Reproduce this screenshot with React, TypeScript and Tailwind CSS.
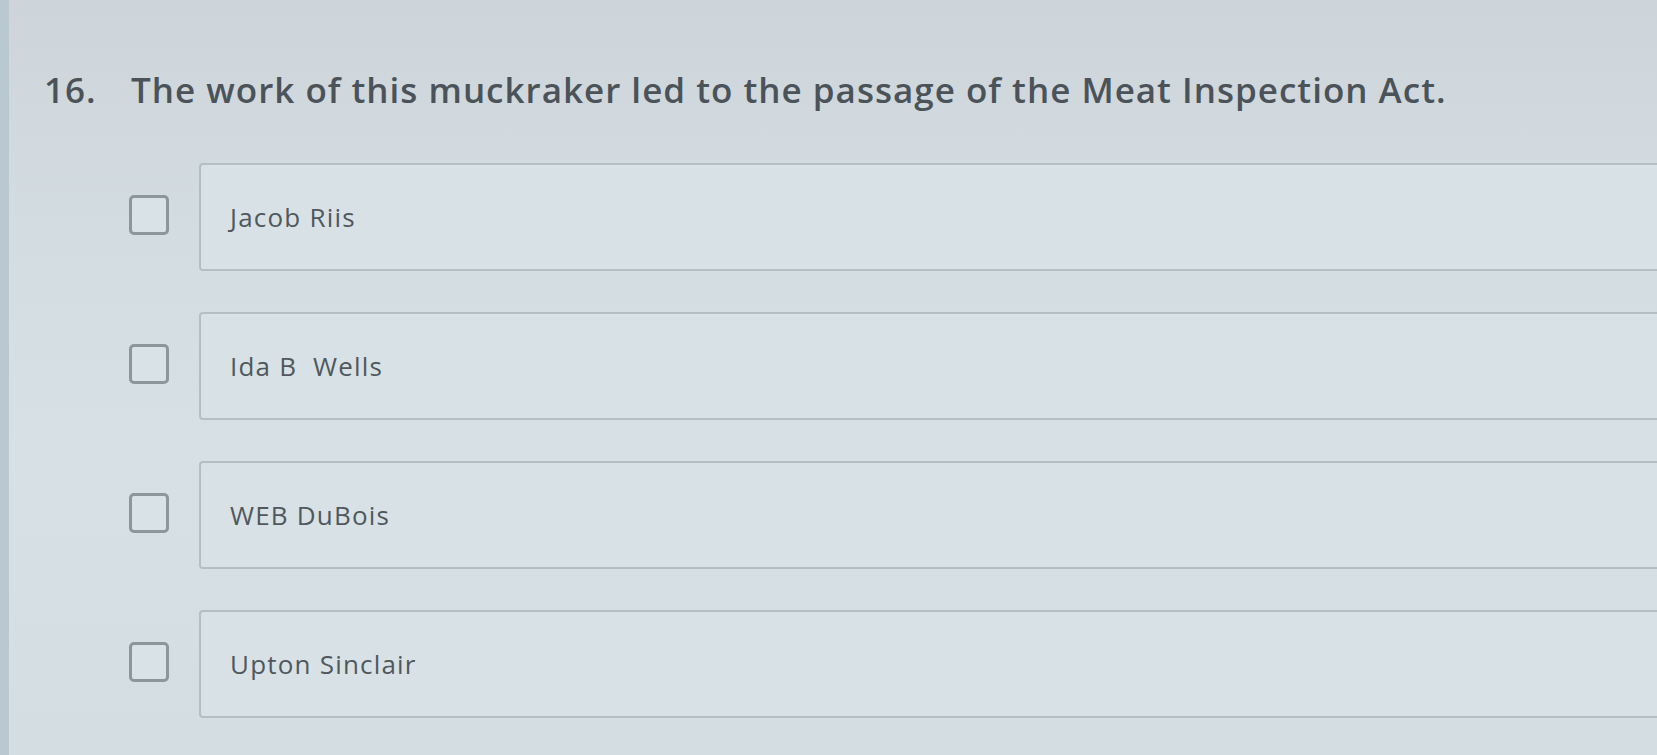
import React from "react";

const options = ["Jacob Riis", "Ida B  Wells", "WEB DuBois", "Upton Sinclair"];

function Checkbox() {
  return (
    <span className="block w-[40px] h-[40px] shrink-0 -translate-y-[2px] rounded-[5px] border-[3px] border-[#8d969b] bg-[#d9e2e6]" />
  );
}

export default function App() {
  return (
    <div
      className="relative w-[1657px] h-[755px] overflow-hidden border-l-[9px] border-[#b9c8d1] bg-[linear-gradient(180deg,#cdd5db_0%,#d3dce1_30%,#d7e1e5_60%,#d4dee2_100%)]"
      style={{ fontFamily: '"Open Sans", "Noto Sans", sans-serif' }}
    >
      <div className="pl-[35px] pt-[70px]">
        <h2 className="flex text-[35px] leading-[40px] font-semibold tracking-[1px] text-[#4b5358]">
          <span className="w-[87px] shrink-0">16.</span>
          <span>The work of this muckraker led to the passage of the Meat Inspection Act.</span>
        </h2>
      </div>

      <ul className="mt-[53px] flex flex-col gap-[41px] pl-[120px]">
        {options.map((o) => (
          <li key={o} className="flex items-center gap-[30px]">
            <Checkbox />
            <div className="flex h-[108px] flex-1 -mr-[40px] items-center rounded-[4px] border-2 border-[#b4bec4] bg-[#d8e2e6] pl-[29px]">
              <span className="whitespace-pre text-[26px] tracking-[1.2px] text-[#50585c]">{o}</span>
            </div>
          </li>
        ))}
      </ul>
    </div>
  );
}
